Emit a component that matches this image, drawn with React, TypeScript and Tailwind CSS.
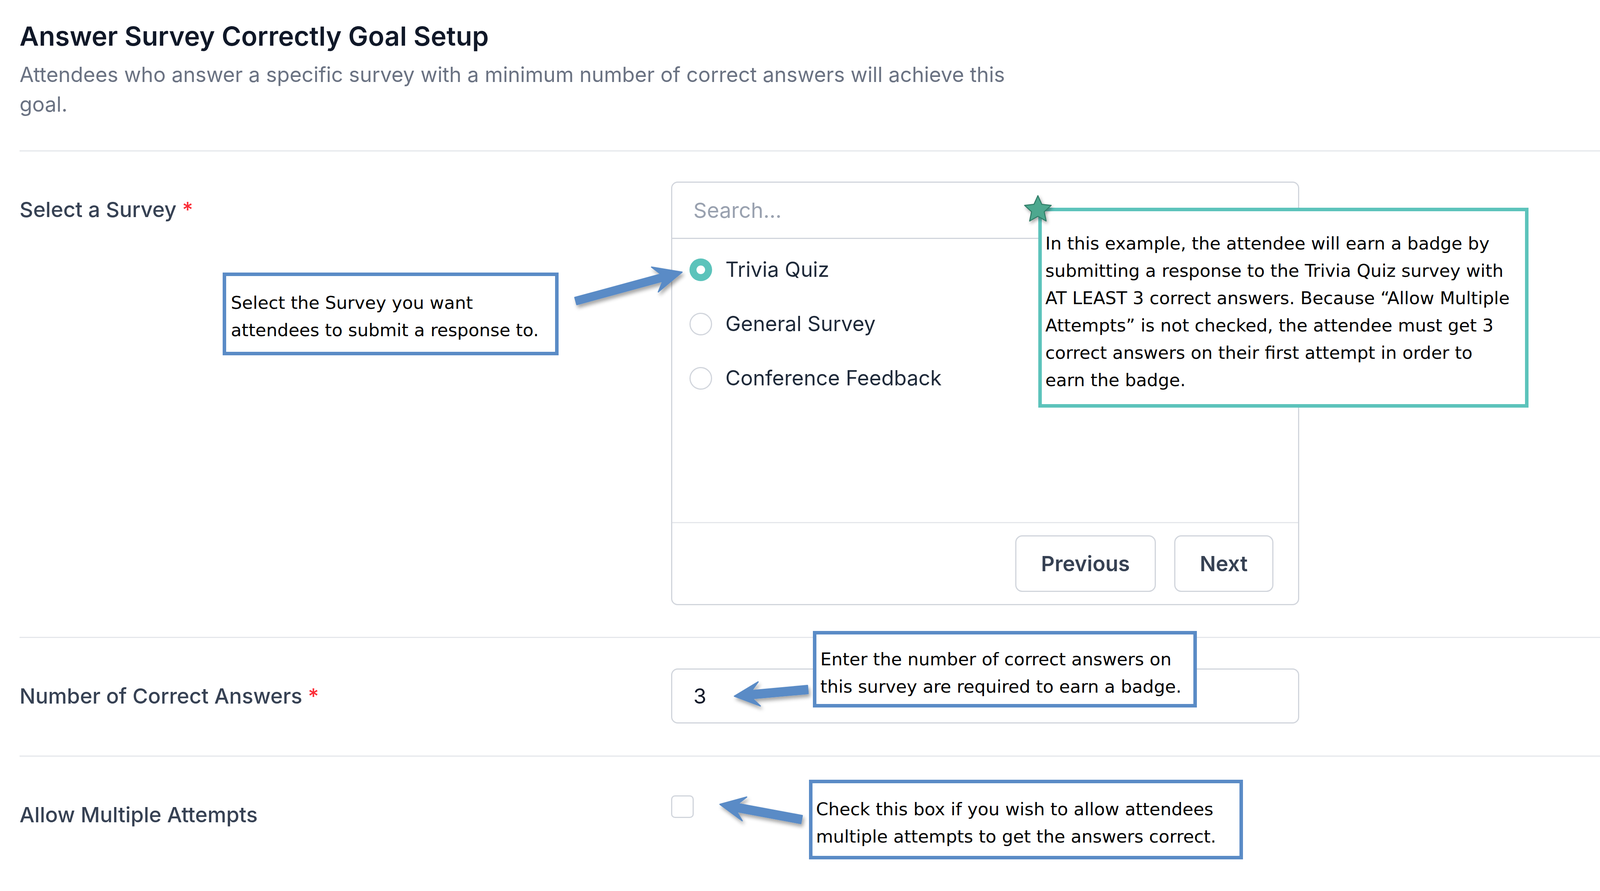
import React from 'react';

type ArrowProps = {
  x1: number;
  y1: number;
  x2: number;
  y2: number;
  ox: number;
  oy: number;
  id: string;
  className: string;
  t?: number;
  hl?: number;
  hw?: number;
};

// blue callout arrow, coordinates are page pixels, ox/oy = the svg's own top-left
const Arrow: React.FC<ArrowProps> = ({ x1, y1, x2, y2, ox, oy, id, className, t = 20, hl = 58, hw = 64 }) => {
  const dx = x2 - x1;
  const dy = y2 - y1;
  const len = Math.hypot(dx, dy);
  const ux = dx / len;
  const uy = dy / len;
  const nx = -uy;
  const ny = ux;
  const bx = x2 - ux * hl;
  const by = y2 - uy * hl;
  const sweep = 10;
  const p = (x: number, y: number) => `${(x - ox).toFixed(1)},${(y - oy).toFixed(1)}`;
  const pts = [
    p(x1 + (nx * t) / 2, y1 + (ny * t) / 2),
    p(bx + (nx * t) / 2 + ux * 8, by + (ny * t) / 2 + uy * 8),
    p(bx + (nx * hw) / 2 - ux * sweep, by + (ny * hw) / 2 - uy * sweep),
    p(x2, y2),
    p(bx - (nx * hw) / 2 - ux * sweep, by - (ny * hw) / 2 - uy * sweep),
    p(bx - (nx * t) / 2 + ux * 8, by - (ny * t) / 2 + uy * 8),
    p(x1 - (nx * t) / 2, y1 - (ny * t) / 2),
  ].join(' ');

  return (
    <svg className={`absolute overflow-visible ${className}`}>
      <defs>
        <filter id={id} x="-30%" y="-60%" width="160%" height="220%">
          <feDropShadow dx="4" dy="7" stdDeviation="5" floodColor="#000" floodOpacity="0.35" />
        </filter>
      </defs>
      <polygon points={pts} fill="#5a8bc6" strokeLinejoin="round" stroke="#5a8bc6" strokeWidth="3" filter={`url(#${id})`} />
    </svg>
  );
};

const Star: React.FC = () => {
  const cx = 40;
  const cy = 40;
  const pts: string[] = [];
  for (let i = 0; i < 10; i++) {
    const r = i % 2 === 0 ? 36 : 17;
    const a = (Math.PI / 5) * i - Math.PI / 2;
    pts.push(`${(cx + r * Math.cos(a)).toFixed(1)},${(cy + r * Math.sin(a)).toFixed(1)}`);
  }
  return (
    <svg className="absolute left-[2617px] top-[497px] w-[80px] h-[80px] overflow-visible">
      <defs>
        <filter id="starShadow" x="-40%" y="-40%" width="180%" height="180%">
          <feDropShadow dx="3" dy="5" stdDeviation="4" floodColor="#000" floodOpacity="0.35" />
        </filter>
      </defs>
      <polygon
        points={pts.join(' ')}
        fill="#4da88f"
        stroke="#2f7c66"
        strokeWidth="2.5"
        strokeLinejoin="round"
        filter="url(#starShadow)"
      />
    </svg>
  );
};

const Radio: React.FC<{ label: string; checked?: boolean }> = ({ label, checked }) => (
  <div className="h-[139px] flex items-center pl-[44px] gap-[34px]">
    {checked ? (
      <span className="w-[58px] h-[58px] rounded-full bg-[#5cc3bb] flex items-center justify-center">
        <span className="w-[22px] h-[22px] rounded-full bg-white" />
      </span>
    ) : (
      <span className="w-[58px] h-[58px] rounded-full border-[3px] border-gray-300 bg-white" />
    )}
    <span className="text-[53px] leading-none text-gray-800">{label}</span>
  </div>
);

const Callout: React.FC<{ className: string; children: React.ReactNode }> = ({ className, children }) => (
  <div
    className={`absolute bg-white font-['DejaVu_Sans',sans-serif] text-[45px] leading-[70px] text-black whitespace-nowrap ${className}`}
  >
    {children}
  </div>
);

export default function App() {
  return (
    <div className="relative w-[4112px] h-[2282px] overflow-hidden bg-white font-['Inter',sans-serif]">
      {/* header */}
      <div className="pl-[50px] pt-[52px] pb-[80px]">
        <h1 className="text-[68px] leading-[80px] font-semibold text-gray-900">Answer Survey Correctly Goal Setup</h1>
        <p className="mt-[21px] max-w-[2600px] text-[53px] leading-[76px] text-gray-500">
          Attendees who answer a specific survey with a minimum number of correct answers will achieve this goal.
        </p>
      </div>

      {/* select a survey */}
      <div className="ml-[50px] border-t-[3px] border-gray-200 pt-[77px] pb-[81px] flex">
        <div className="w-[1668px] pt-[33px] text-[54px] leading-[78px] font-medium text-gray-700">
          Select a Survey <span className="text-red-500">*</span>
        </div>
        <div className="w-[1608px] h-[1085px] border-[3px] border-gray-300 rounded-[17px] flex flex-col">
          <div className="h-[144px] border-b-[3px] border-gray-300 flex items-center pl-[54px] text-[54px] text-gray-400">
            Search...
          </div>
          <div className="flex-1 pt-[9px]">
            <Radio label="Trivia Quiz" checked />
            <Radio label="General Survey" />
            <Radio label="Conference Feedback" />
          </div>
          <div className="border-t-[3px] border-gray-200 py-[31px] pr-[63px] flex justify-end gap-[47px]">
            <button className="h-[145px] px-[63px] border-[3px] border-gray-300 rounded-[18px] text-[54px] font-semibold text-gray-700">
              Previous
            </button>
            <button className="h-[145px] px-[63px] border-[3px] border-gray-300 rounded-[18px] text-[54px] font-semibold text-gray-700">
              Next
            </button>
          </div>
        </div>
      </div>

      {/* number of correct answers */}
      <div className="ml-[50px] border-t-[3px] border-gray-200 pt-[78px] pb-[82px] flex items-center">
        <div className="w-[1668px] text-[54px] leading-[78px] font-medium text-gray-700">
          Number of Correct Answers <span className="text-red-500">*</span>
        </div>
        <div className="w-[1608px] h-[141px] border-[3px] border-gray-300 rounded-[17px] flex items-center pl-[54px] text-[54px] text-gray-900">
          3
        </div>
      </div>

      {/* allow multiple attempts */}
      <div className="ml-[50px] border-t-[3px] border-gray-200 flex">
        <div className="w-[1668px] pt-[110px] text-[54px] leading-[78px] font-medium text-gray-700">
          Allow Multiple Attempts
        </div>
        <div className="pt-[99px]">
          <div className="w-[58px] h-[58px] border-[3px] border-gray-300 rounded-[10px]" />
        </div>
      </div>

      {/* annotations */}
      <Arrow id="a1" x1={1474} y1={771} x2={1746} y2={697} ox={1430} oy={640} className="left-[1430px] top-[640px] w-[340px] h-[170px]" t={19} hl={62} hw={66} />
      <Callout className="left-[570px] top-[698px] w-[860px] h-[212px] border-[9px] border-[#5a8bc6] pl-[12px] pt-[34px]">
        Select the Survey you want
        <br />
        attendees to submit a response to.
      </Callout>

      <Callout className="left-[2658px] top-[532px] w-[1255px] h-[512px] border-[9px] border-[#5cc3bb] pl-[9px] pt-[48px]">
        In this example, the attendee will earn a badge by
        <br />
        submitting a response to the Trivia Quiz survey with
        <br />
        AT LEAST 3 correct answers. Because “Allow Multiple
        <br />
        Attempts” is not checked, the attendee must get 3
        <br />
        correct answers on their first attempt in order to
        <br />
        earn the badge.
      </Callout>
      <Star />

      <Arrow id="a2" x1={2068} y1={1766} x2={1880} y2={1783} ox={1850} oy={1710} className="left-[1850px] top-[1710px] w-[240px] h-[130px]" t={21} hl={54} hw={62} />
      <Callout className="left-[2081px] top-[1616px] w-[983px] h-[196px] border-[9px] border-[#5a8bc6] pl-[10px] pt-[29px]">
        Enter the number of correct answers on
        <br />
        this survey are required to earn a badge.
      </Callout>

      <Arrow id="a3" x1={2052} y1={2099} x2={1843} y2={2060} ox={1810} oy={2000} className="left-[1810px] top-[2000px] w-[260px] h-[140px]" t={21} hl={54} hw={62} />
      <Callout className="left-[2071px] top-[1997px] w-[1111px] h-[204px] border-[9px] border-[#5a8bc6] pl-[9px] pt-[32px]">
        Check this box if you wish to allow attendees
        <br />
        multiple attempts to get the answers correct.
      </Callout>
    </div>
  );
}
